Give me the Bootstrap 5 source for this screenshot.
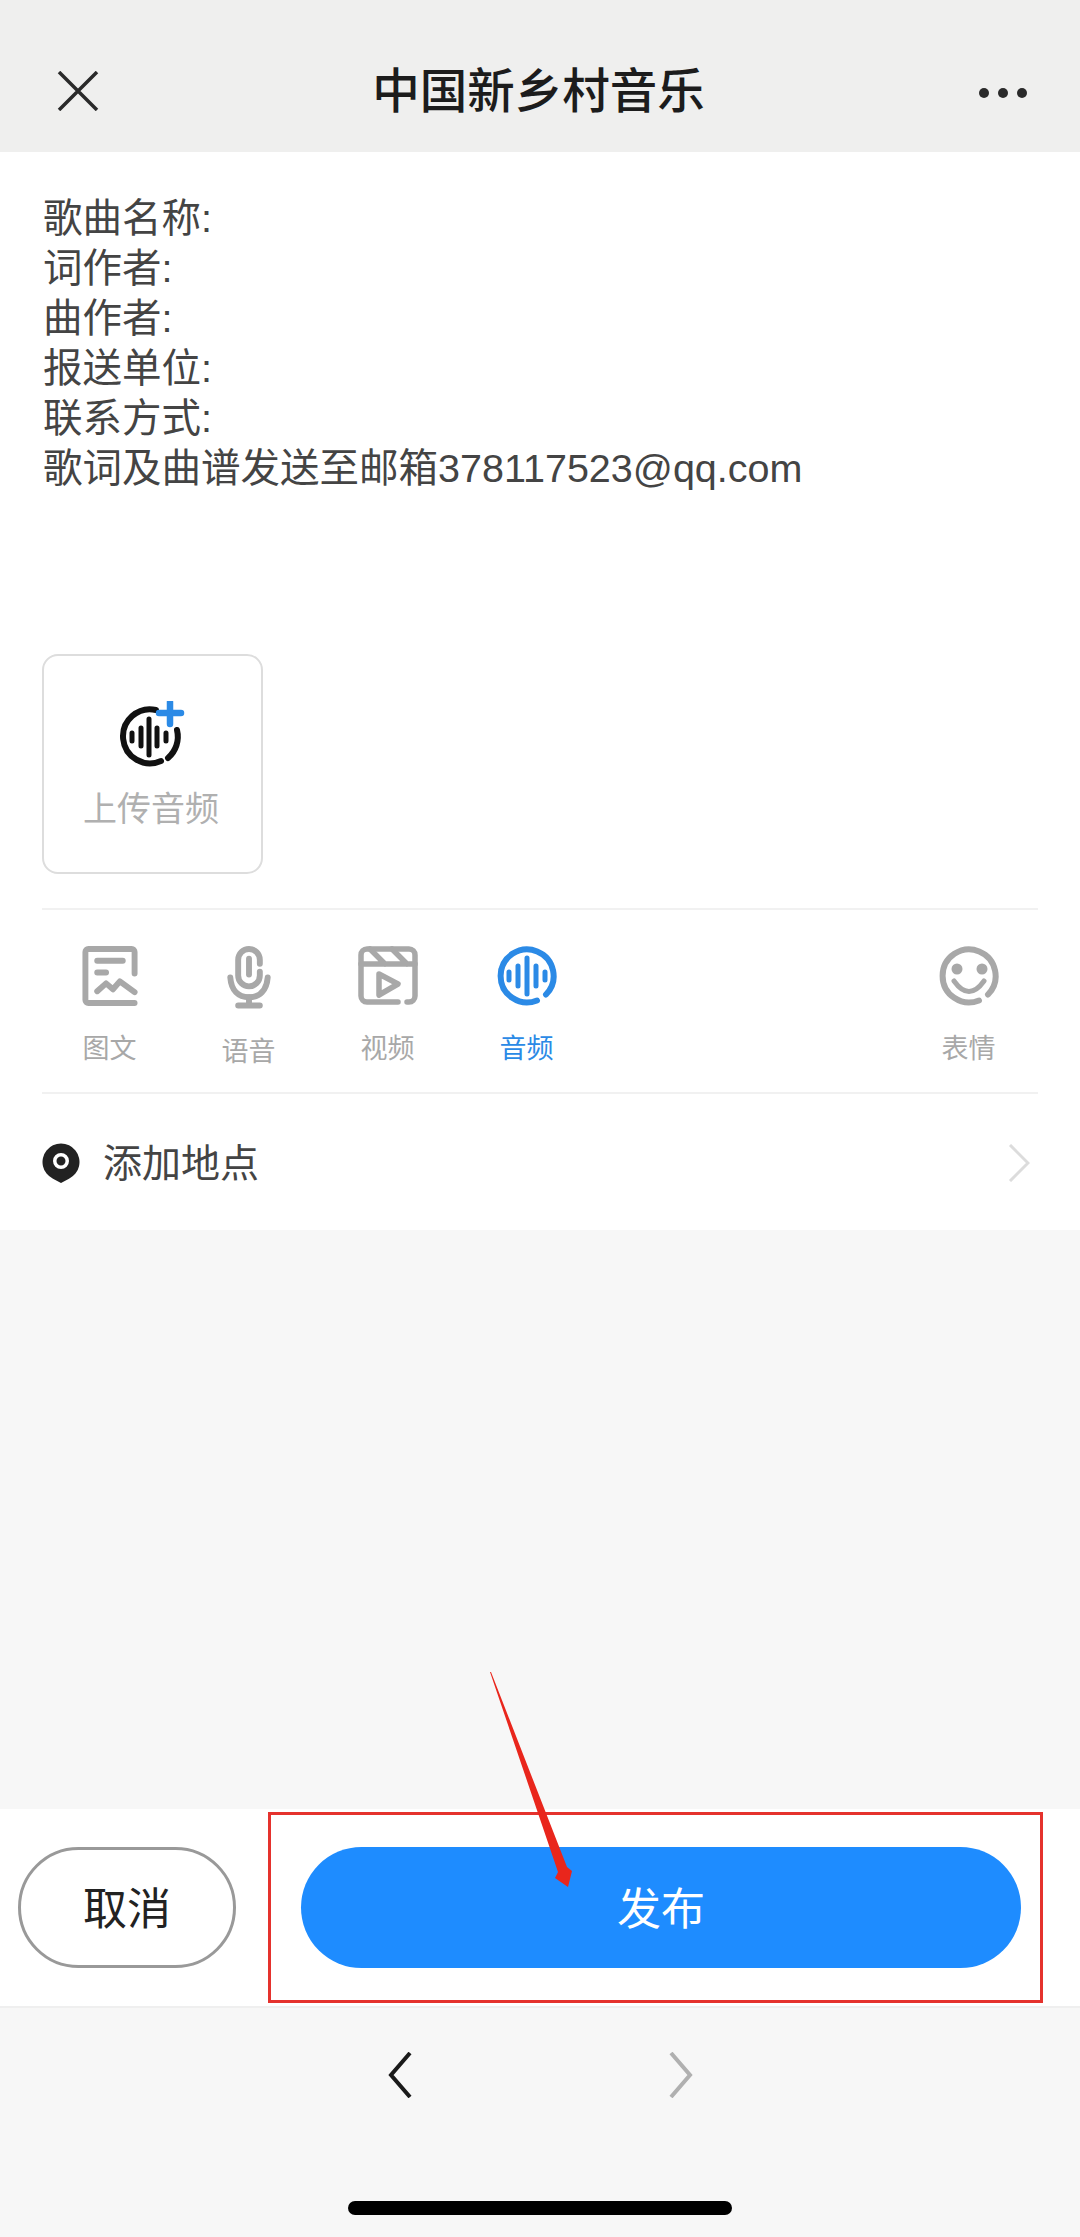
<!DOCTYPE html>
<html lang="zh-CN">
  <head>
    <meta charset="UTF-8" />
    <title>中国新乡村音乐</title>
    <link
      href="https://cdn.jsdelivr.net/npm/bootstrap@5.3.3/dist/css/bootstrap.min.css"
      rel="stylesheet"
    />
    <style>
      body {
        margin: 0;
        background: #f7f7f7;
        font-family: "Liberation Sans", "Noto Sans CJK SC", sans-serif;
      }
      .page-shell { width: 1080px; height: 2237px; }
      .top-bar { height: 152px; background: #efefee; padding: 0 52px 37px 57px; }
      .top-title { font-size: 47.5px; font-weight: 500; color: #1c1c1c; line-height: 1; }
      .form-area { height: 1078px; background: #fff; padding: 41px 42px 0; }
      .song-text { font-size: 39.5px; line-height: 50px; color: #444; padding-left: 1px; }
      .upload-box {
        width: 221px; height: 220px; margin-top: 161px;
        border: 2px solid #ddd; border-radius: 16px; padding-top: 45px;
      }
      .upload-label { font-size: 34px; color: #b0b0b0; line-height: 1; margin-top: 25px; margin-left: -3px; }
      .tool-row {
        height: 186px; margin-top: 34px; padding-top: 36px;
        border-top: 2px solid #f1f1f1; border-bottom: 2px solid #f1f1f1;
      }
      .tool-item { width: 139px; }
      .tool-first { margin-left: -2px; }
      .tool-label { font-size: 27px; line-height: 1; color: #a8a8a8; margin-top: 30px; }
      .tool-active { color: #2b8ae6; }
      .place-row { height: 136px; padding-top: 2px; }
      .place-text { font-size: 39px; color: #444; line-height: 1; margin-left: 23px; }
      .action-bar {
        height: 199px; background: #fff; padding: 38px 59px 0 18px; gap: 65px;
        border-bottom: 2px solid #efefef;
      }
      .btn-cancel, .btn-publish { height: 121px; font-size: 44px; line-height: 1; padding: 4px 0 0; }
      .btn-cancel { width: 218px; border: 3px solid #999; color: #222; background: #fff; }
      .btn-publish { border: 0; background: #1e8cff; color: #fff; }
      .nav-foot { padding: 44px 0 22px; }
      .nav-arrows { gap: 257px; }
      .home-line { width: 384px; height: 14px; background: #000; border-radius: 7px; margin-top: 103px; }
      .red-frame {
        left: 268px; top: 1812px; width: 775px; height: 191px;
        border: 3px solid #e5322d; pointer-events: none;
      }
      .red-arrow { left: 480px; top: 1660px; pointer-events: none; }
    </style>
  </head>
  <body>
    <div class="page-shell position-relative d-flex flex-column overflow-hidden">
      <!-- top bar -->
      <div class="top-bar d-flex justify-content-between align-items-end">
        <svg width="42" height="40" viewBox="0 0 42 40" class="mb-1">
          <path d="M2 1 L40 39 M40 1 L2 39" stroke="#2a2a2a" stroke-width="3.5" fill="none" />
        </svg>
        <div class="top-title">中国新乡村音乐</div>
        <svg width="50" height="12" viewBox="0 0 50 12" class="mb-3">
          <circle cx="6" cy="6" r="5" fill="#2a2a2a" />
          <circle cx="25" cy="6" r="5" fill="#2a2a2a" />
          <circle cx="44" cy="6" r="5" fill="#2a2a2a" />
        </svg>
      </div>

      <!-- form -->
      <div class="form-area">
        <div class="song-text">
          <div>歌曲名称:</div>
          <div>词作者:</div>
          <div>曲作者:</div>
          <div>报送单位:</div>
          <div>联系方式:</div>
          <div>歌词及曲谱发送至邮箱378117523@qq.com</div>
        </div>

        <div class="upload-box d-flex flex-column align-items-center">
          <svg width="75" height="66" viewBox="0 0 75 66">
            <g fill="none" stroke="#111" stroke-linecap="round">
              <path d="M41 9 A27 27 0 1 0 46 60" stroke-width="6" />
              <path d="M53 57 A28 28 0 0 0 62 29" stroke-width="6" />
              <path d="M17 32 V40 M26 27 V45 M34 18 V54 M42 27 V45 M51 32 V40" stroke-width="5" />
            </g>
            <path d="M44 12 H66 M55 1 V23" stroke="#2b8ae6" stroke-width="6.500" stroke-linecap="round" fill="none" />
          </svg>
          <div class="upload-label">上传音频</div>
        </div>

        <!-- tools -->
        <div class="tool-row d-flex align-items-start">
          <div class="tool-item tool-first d-flex flex-column align-items-center">
            <svg width="56" height="60" viewBox="0 0 56 61">
              <g fill="none" stroke="#a8a8a8" stroke-width="6" stroke-linecap="round" stroke-linejoin="round">
                <path d="M53 28 V6 a3 3 0 0 0 -3 -3 H6 a3 3 0 0 0 -3 3 V55 a3 3 0 0 0 3 3 H53" />
                <path d="M15 15 H41 M15 27 H24" />
                <path d="M15 46 L24 38 L31 44 L38 36 L53 47" />
              </g>
            </svg>
            <div class="tool-label">图文</div>
          </div>
          <div class="tool-item d-flex flex-column align-items-center">
            <svg width="46" height="63" viewBox="0 0 46 64">
              <g fill="none" stroke="#a8a8a8" stroke-width="6" stroke-linecap="round">
                <path d="M34 18 V14 A11 11 0 0 0 12 14 V30 A11 11 0 0 0 34 30 V26" />
                <path d="M23 13 V29" />
                <path d="M4 32 C5 45 12 52 23 52 C34 52 41 45 42 32" />
                <path d="M23 52 V60 M12 60.500 H34" />
              </g>
            </svg>
            <div class="tool-label">语音</div>
          </div>
          <div class="tool-item d-flex flex-column align-items-center">
            <svg width="60" height="60" viewBox="0 0 60 60">
              <g fill="none" stroke="#a8a8a8" stroke-width="5.500" stroke-linecap="round" stroke-linejoin="round">
                <path d="M40 56 H9 a6 6 0 0 1 -6 -6 V9 a6 6 0 0 1 6 -6 H51 a6 6 0 0 1 6 6 V50 a6 6 0 0 1 -6 6 H49" />
                <path d="M3 18 H57 M12 3 L27 18 M34 3 L49 18" />
                <path d="M21 28 L40 38 L21 49 Z" />
              </g>
            </svg>
            <div class="tool-label">视频</div>
          </div>
          <div class="tool-item d-flex flex-column align-items-center">
            <svg width="62" height="60" viewBox="0 0 62 60">
              <g fill="none" stroke="#2b8ae6" stroke-linecap="round">
                <path d="M41 54.500 A26.500 26.500 0 1 1 50 48.500" stroke-width="6" />
                <path d="M13 26 V34 M22 20 V40 M31 12 V48 M40 20 V40 M49 26 V34" stroke-width="5" />
              </g>
            </svg>
            <div class="tool-label tool-active">音频</div>
          </div>
          <div class="tool-item d-flex flex-column align-items-center ms-auto">
            <svg width="60" height="60" viewBox="0 0 60 60">
              <g fill="none" stroke="#a8a8a8" stroke-linecap="round">
                <path d="M40 54.500 A26.500 26.500 0 1 1 49 48.500" stroke-width="6" />
                <path d="M15 35 Q30 56 45 35" stroke-width="5" />
              </g>
              <circle cx="18" cy="23" r="5.500" fill="#a8a8a8" />
              <circle cx="43" cy="23" r="5.500" fill="#a8a8a8" />
            </svg>
            <div class="tool-label">表情</div>
          </div>
        </div>

        <!-- place -->
        <div class="place-row d-flex align-items-center">
          <svg width="38" height="40" viewBox="0 0 38 40">
            <path d="M19 40 L11 35.700 A18.500 18.500 0 1 1 27 35.700 Z" fill="#222" />
            <circle cx="19" cy="18" r="6.250" fill="#222" stroke="#fff" stroke-width="3.500" />
          </svg>
          <div class="place-text">添加地点</div>
          <svg width="22" height="38" viewBox="0 0 22 38" class="ms-auto me-2">
            <path d="M2 1 L20 19 L2 37" fill="none" stroke="#dcdcdc" stroke-width="3" />
          </svg>
        </div>
      </div>

      <div class="flex-grow-1"></div>

      <!-- actions -->
      <div class="action-bar d-flex align-items-start">
        <button class="btn btn-cancel rounded-pill" type="button">取消</button>
        <button class="btn btn-publish rounded-pill flex-grow-1" type="button">发布</button>
      </div>

      <!-- browser nav -->
      <div class="nav-foot d-flex flex-column align-items-center">
        <div class="nav-arrows d-flex">
          <svg width="24" height="46" viewBox="0 0 24 46">
            <path d="M22 1 L3 23 L22 45" fill="none" stroke="#1a1a1a" stroke-width="4" />
          </svg>
          <svg width="24" height="46" viewBox="0 0 24 46">
            <path d="M2 1 L21 23 L2 45" fill="none" stroke="#b0b0b0" stroke-width="4" />
          </svg>
        </div>
        <div class="home-line"></div>
      </div>

      <!-- annotation -->
      <div class="red-frame position-absolute"></div>
      <svg class="red-arrow position-absolute" width="100" height="235" viewBox="0 0 100 235">
        <polygon points="10,12 11,12 87,207 92,211 88,227 75,218 78,212" fill="#e9261c" />
      </svg>
    </div>

    <script src="https://cdn.jsdelivr.net/npm/bootstrap@5.3.3/dist/js/bootstrap.bundle.min.js"></script>
  </body>
</html>
